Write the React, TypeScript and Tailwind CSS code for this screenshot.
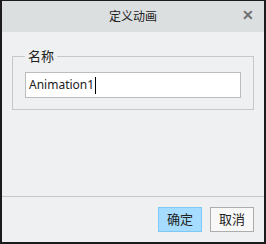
export default function App() {
  const font = { fontFamily: '"Segoe UI", "Noto Sans", "Noto Sans CJK SC", sans-serif' }
  return (
    <div
      className="w-[266px] h-[244px] flex flex-col bg-[#eef0f1] border-x-2 border-b-2 border-t border-[#1b1b1b] text-[#222]"
      style={font}
    >
      <div className="h-[31px] shrink-0 bg-[#dcdfe0] flex items-center justify-center relative">
        <span className="text-[12px]">定义动画</span>
        <span className="absolute right-[10px] top-[7px] text-[14px] font-bold text-[#707070] leading-none">
          ✕
        </span>
      </div>
      <div className="flex-1 px-[10px] pt-[15px]">
        <fieldset className="border border-[#c8c8c8] px-[12px] pb-[11px] pt-[7px]">
          <legend className="px-[3px] text-[13px] leading-[18px]">名称</legend>
          <div className="h-[26px] border border-[#bcbcbc] bg-white flex items-center pl-[3px] text-[12px]">
            <span>Animation1</span>
            <span className="w-px h-[17px] bg-black ml-px" />
          </div>
        </fieldset>
      </div>
      <div className="h-[46px] shrink-0 border-t border-[#c6c6c6] flex items-start justify-end gap-[8px] pt-[10px] pr-[10px]">
        <button className="w-[44px] h-[25px] bg-[#a6dcff] border border-[#7ec8f5] text-[13px]">确定</button>
        <button className="w-[44px] h-[25px] bg-[#f8f8f8] border border-[#adadad] text-[13px]">取消</button>
      </div>
    </div>
  )
}
